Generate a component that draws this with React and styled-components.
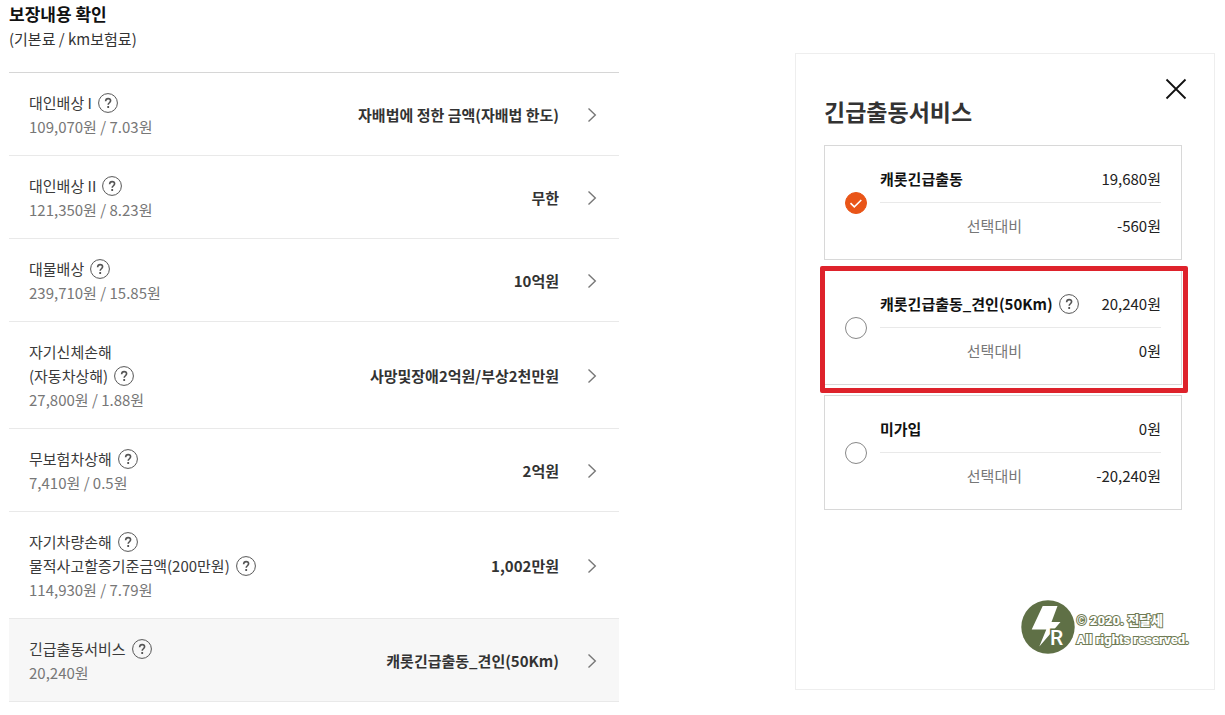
import React from "react";
import styled, { createGlobalStyle } from "styled-components";

const GlobalStyle = createGlobalStyle`
  * { box-sizing: border-box; }
  body {
    margin: 0;
    background: #fff;
    color: #333;
    font-family: "Noto Sans CJK KR", "Noto Sans", sans-serif;
    font-size: 15px;
    line-height: 24px;
  }
  h1, h2, p, ul { margin: 0; padding: 0; }
  ul { list-style: none; }
  button { padding: 0; border: 0; background: none; font: inherit; color: inherit; cursor: pointer; }
`;

const Page = styled.main`
  display: grid;
  grid-template-columns: minmax(0, 610fr) minmax(0, 420fr);
  column-gap: 176px;
  align-items: start;
  padding: 2px 10px 12px 9px;
`;

const Heading = styled.h1`
  color: #111;
  font-size: 17px;
  font-weight: 700;
  line-height: 24px;
`;

const Subheading = styled.p`
  margin-bottom: 21px;
  padding-top: 1px;
`;

const CoverageList = styled.ul`
  border-top: 1px solid #d6d6d6;
`;

const CoverageRow = styled.li`
  display: flex;
  align-items: center;
  gap: 24px;
  padding: 18px 20px 16px;
  border-bottom: 1px solid #e9e9e9;
  background: ${(p) => (p.$active ? "#f7f7f7" : "#fff")};
`;

const CoverageInfo = styled.div`
  flex: 1;
`;

const LabelLine = styled.p`
  display: flex;
  align-items: center;
  gap: 6px;
  height: 24px;
  color: #3a3a3a;
`;

const Price = styled.p`
  color: #777;
`;

const CoverageValue = styled.strong`
  font-weight: 700;
  text-align: right;
`;

const ChevronButton = styled.button`
  display: flex;
  width: 16px;
  height: 24px;
  align-items: center;
  justify-content: center;
`;

const HelpButton = styled.button`
  display: flex;
  width: 20px;
  height: 20px;
  flex: none;
`;

const Panel = styled.section`
  display: flex;
  flex-direction: column;
  margin-top: 51px;
  padding: 21px 0 35px;
  border: 1px solid #eee;
`;

const PanelHeader = styled.header`
  display: flex;
  justify-content: space-between;
  align-items: flex-start;
  padding: 0 24px 18px 28px;
`;

const PanelTitle = styled.h2`
  padding-top: 20px;
  font-size: 23px;
  font-weight: 700;
  line-height: 32px;
`;

const CloseButton = styled.button`
  display: flex;
  width: 28px;
  height: 28px;
`;

const Options = styled.div`
  display: flex;
  flex-direction: column;
  gap: 10px;
  padding: 0 32px 0 28px;
`;

const Option = styled.div`
  position: relative;
  display: flex;
  align-items: center;
  gap: 13px;
  padding: 10px 20px;
  border: 1px solid #d8d8d8;
`;

const Highlight = styled.span`
  position: absolute;
  inset: -5px -7px -9px -5px;
  border: 5px solid #de222b;
  border-radius: 2px;
  pointer-events: none;
`;

const RadioWrap = styled.span`
  display: grid;
  flex: none;
  svg { grid-area: 1 / 1; visibility: hidden; pointer-events: none; }
  input:checked + svg { visibility: visible; }
`;

const Radio = styled.input`
  grid-area: 1 / 1;
  appearance: none;
  width: 22px;
  height: 22px;
  margin: 0;
  border: 1px solid #888;
  border-radius: 50%;
  background: #fff;
  &:checked { border-color: #e95518; background: #e95518; }
`;

const OptionBody = styled.div`
  flex: 1;
  color: #222;
`;

const OptionLine = styled.div`
  display: flex;
  align-items: center;
  gap: 6px;
  height: 46px;
  & + & { border-top: 1px solid #e9e9e9; height: 47px; }
`;

const OptionName = styled.label`
  color: #111;
  font-weight: 700;
`;

const Amount = styled.span`
  margin-left: auto;
`;

const CompareLabel = styled.span`
  flex: 1;
  color: #777;
  text-align: right;
`;

const CompareAmount = styled.span`
  width: 133px;
  text-align: right;
`;

const Credit = styled.footer`
  display: flex;
  align-items: center;
  gap: 1px;
  align-self: flex-end;
  margin-top: 90px;
  padding-right: 25px;
`;

const CreditText = styled.p`
  padding-top: 6px;
  color: #fff;
  font-family: Roboto, "Noto Sans CJK KR", sans-serif;
  font-size: 13px;
  font-weight: 900;
  line-height: 19px;
  -webkit-text-stroke: 2px #6f7b54;
  paint-order: stroke fill;
`;

const Help = ({ topic }) => (
  <HelpButton type="button" aria-label={`${topic} 도움말`}>
    <svg width="20" height="20" viewBox="0 0 20 20" fill="none" stroke="#555">
      <circle cx="10" cy="10" r="9.4" />
      <path d="M7.6 8.2c.1-1.7 1.1-2.6 2.5-2.6 1.5 0 2.5.9 2.5 2.2 0 1.9-2.4 2-2.4 4" strokeWidth="1.6" />
      <path d="M10.2 13v2" strokeWidth="1.8" />
    </svg>
  </HelpButton>
);

const coverages = [
  { lines: [["대인배상 I", true]], price: "109,070원 / 7.03원", value: "자배법에 정한 금액(자배법 한도)" },
  { lines: [["대인배상 II", true]], price: "121,350원 / 8.23원", value: "무한" },
  { lines: [["대물배상", true]], price: "239,710원 / 15.85원", value: "10억원" },
  { lines: [["자기신체손해", false], ["(자동차상해)", true]], price: "27,800원 / 1.88원", value: "사망및장애2억원/부상2천만원" },
  { lines: [["무보험차상해", true]], price: "7,410원 / 0.5원", value: "2억원" },
  { lines: [["자기차량손해", true], ["물적사고할증기준금액(200만원)", true]], price: "114,930원 / 7.79원", value: "1,002만원" },
  { lines: [["긴급출동서비스", true]], price: "20,240원", value: "캐롯긴급출동_견인(50Km)", active: true },
];

const options = [
  { id: "basic", name: "캐롯긴급출동", amount: "19,680원", diff: "-560원", checked: true },
  { id: "towing", name: "캐롯긴급출동_견인(50Km)", amount: "20,240원", diff: "0원", help: true, highlighted: true },
  { id: "none", name: "미가입", amount: "0원", diff: "-20,240원" },
];

export default function App() {
  return (
    <>
      <GlobalStyle />
      <Page>
        <section>
          <Heading>보장내용 확인</Heading>
          <Subheading>(기본료 / km보험료)</Subheading>
          <CoverageList>
            {coverages.map((c) => (
              <CoverageRow key={c.lines[0][0]} $active={c.active}>
                <CoverageInfo>
                  {c.lines.map(([text, help]) => (
                    <LabelLine key={text}>
                      {text}
                      {help && <Help topic={text} />}
                    </LabelLine>
                  ))}
                  <Price>{c.price}</Price>
                </CoverageInfo>
                <CoverageValue>{c.value}</CoverageValue>
                <ChevronButton type="button" aria-label={`${c.lines[0][0]} 변경`}>
                  <svg width="16" height="16" viewBox="0 0 16 16" fill="none" stroke="#777" strokeWidth="1.4">
                    <path d="M5.5 1.5L12.3 8l-6.8 6.5" />
                  </svg>
                </ChevronButton>
              </CoverageRow>
            ))}
          </CoverageList>
        </section>

        <Panel>
          <PanelHeader>
            <PanelTitle>긴급출동서비스</PanelTitle>
            <CloseButton type="button" aria-label="닫기">
              <svg width="28" height="28" viewBox="0 0 28 28" fill="none" stroke="#111" strokeWidth="1.8">
                <path d="M4.5 4.5l19 19M23.5 4.5l-19 19" />
              </svg>
            </CloseButton>
          </PanelHeader>
          <Options role="radiogroup" aria-label="긴급출동서비스">
            {options.map((o) => (
              <Option key={o.id}>
                <RadioWrap>
                  <Radio type="radio" name="service" id={o.id} defaultChecked={o.checked} />
                  <svg width="22" height="22" viewBox="0 0 22 22" fill="none" stroke="#fff" strokeWidth="1.6">
                    <path d="M5.5 11.2l3.8 3.6 7-6.8" />
                  </svg>
                </RadioWrap>
                <OptionBody>
                  <OptionLine>
                    <OptionName htmlFor={o.id}>{o.name}</OptionName>
                    {o.help && <Help topic={o.name} />}
                    <Amount>{o.amount}</Amount>
                  </OptionLine>
                  <OptionLine>
                    <CompareLabel>선택대비</CompareLabel>
                    <CompareAmount>{o.diff}</CompareAmount>
                  </OptionLine>
                </OptionBody>
                {o.highlighted && <Highlight />}
              </Option>
            ))}
          </Options>
          <Credit>
            <svg width="54" height="54" viewBox="0 0 54 54" aria-hidden="true">
              <circle cx="27" cy="27" r="26.7" fill="#5f7046" />
              <path d="M21.7 6H36.5l-6 16H39.5L18.3 46.5l7-17H10.7z" fill="#fff" />
              <text x="29" y="44.5" fill="#fff" stroke="#5f7046" strokeWidth="3" paintOrder="stroke" fontFamily="Roboto, sans-serif" fontSize="21" fontWeight="500">R</text>
            </svg>
            <CreditText>
              © 2020. 전달세
              <br />
              All rights reserved.
            </CreditText>
          </Credit>
        </Panel>
      </Page>
    </>
  );
}
